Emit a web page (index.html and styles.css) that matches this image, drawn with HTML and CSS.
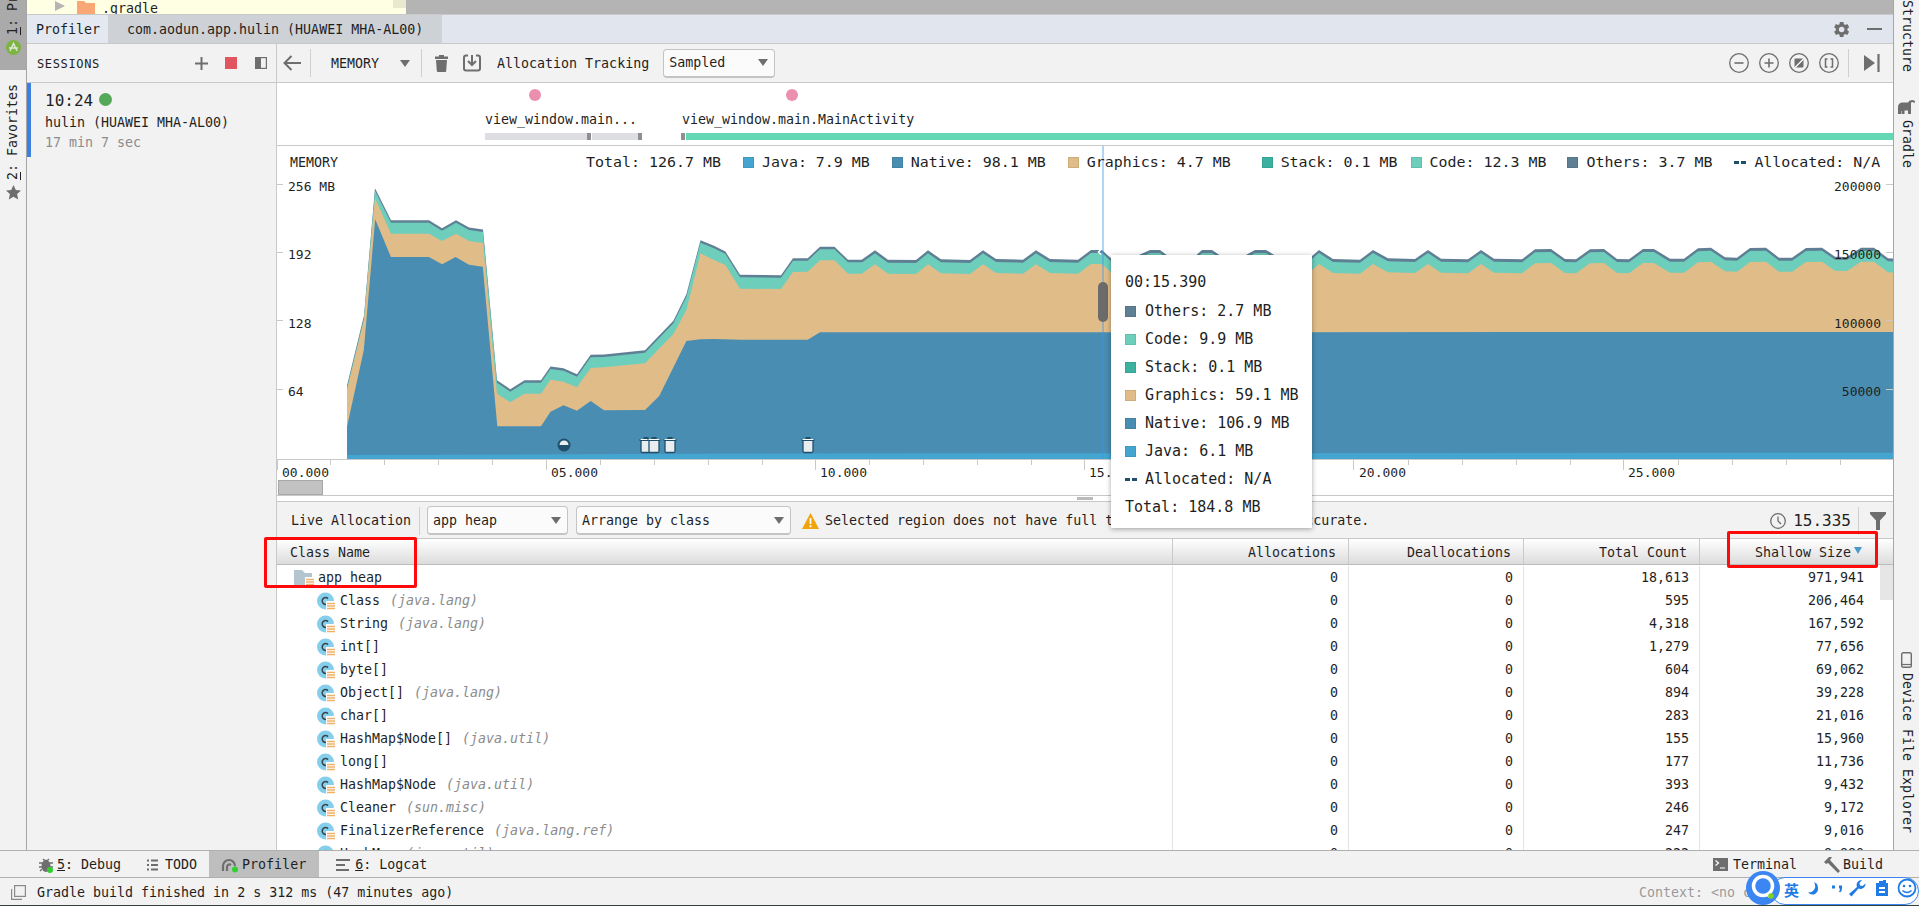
FILE: index.html
```html
<!DOCTYPE html>
<html lang="en">
<head>
<meta charset="utf-8">
<title>Profiler</title>
<link rel="stylesheet" href="styles.css">
</head>
<body>
<svg class="defs" width="0" height="0" aria-hidden="true">
  <defs>
    <g id="listmark"><rect x="9" y="9" width="9" height="9" fill="#fff"/><path d="M10 11.5h8M10 14h8M10 16.5h8" stroke="#efb26e" stroke-width="1.4"/></g>
    <symbol id="cls" viewBox="0 0 18 18"><circle cx="8.5" cy="9" r="8.5" fill="#86cfec"/><path d="M11 6.6A3.4 3.4 0 1 0 11 11.4" fill="none" stroke="#37474f" stroke-width="1.5"/><use href="#listmark"/></symbol>
    <symbol id="fold" viewBox="0 0 20 16"><path d="M0 0h8l3 3h7v13H0z" fill="#b4c5d0"/><g transform="translate(2 -2)"><use href="#listmark"/></g></symbol>
    <path id="tail" d="M862 259.5L875 250.3 888 259.7 916 260 928 250.3 941 259.3 970 260 983 250.3 996 259 1023 259.7 1036 250.3 1050 259 1078 259.7 1091 250 1102 250 1111 258.3 1130 259 1150 250 1160 250 1172 259 1192 259 1202 250 1212 250 1221 256 1244 256 1255 250 1266 250 1276 256 1312 256 1319 250 1333 259 1360 259.7 1373 250 1388 258.3 1415 259 1428 250 1441 258.7 1468 259.3 1481 250 1494 258.7 1522 259.3 1535 249.3 1551 249 1565 259 1576 259.3 1590 249.3 1604 249 1617 259 1629 259.3 1643 249 1654 249 1670 258.7 1684 258.7 1698 248.3 1711 247.7 1725 257.3 1737 257.7 1750 248 1766 247.7 1779 257.7 1792 257.7 1806 248 1822 247.7 1835 256.7 1847 257 1861 247.7 1874 247.7 1888 258.3 1893 258.5V400H862Z"/>
    <path id="codehead" d="M347 459V388L364 318 375 190.7 391 222.7H429L442 230.7 456 222.7 469 230 483 232 497 382.7 510.3 391.7 524.5 382.7H541L550.5 369 563.5 370.7 577 376.7 590.7 357.3 604 357 645 352.7 673.4 323.3 686.4 296.7 700.5 242.7 714 248.3 725.4 254 740 277.3 781 277.7 793 260.7H807.7L820 249.3H834.5L848 262.3H863V459Z"/>
    <g id="trash"><path d="M-5 -5h10v11q0 1.500-1.500 1.500h-7q-1.500 0-1.500-1.500z" fill="#e9edf0" stroke="#1f4f6b" stroke-width="1.300"/><path d="M-6.500 -5h13M-2.500 -7h5" stroke="#1f4f6b" stroke-width="1.800" /><path d="M-5.500 -5.500h11" stroke="#fff" stroke-width="1"/></g>
  </defs>
</svg>

<div class="app">
  <div class="main">
    <aside class="left-strip">
      <div class="project-block">
        <div class="v-text up"><u>1</u>: Project</div>
        <svg class="android" width="15" height="15" viewBox="0 0 15 15"><circle cx="7.500" cy="7.500" r="7.500" fill="#7cb342"/><path d="M4 11L7.500 3.500 11 11M3 8h9" fill="none" stroke="#dfe7d8" stroke-width="1.500"/></svg>
      </div>
      <div class="fav-block">
        <div class="v-text up"><u>2</u>: Favorites</div>
        <svg width="15" height="15" viewBox="0 0 15 15"><path d="M7.500 0l2.300 5 5.200.6-3.900 3.500 1.100 5.400-4.700-2.800-4.700 2.800 1.100-5.400L0 5.600 5.200 5z" fill="#6e6e6e"/></svg>
      </div>
    </aside>

    <div class="center">
      <div class="code-strip">
        <div class="code-yellow">
          <span class="tree-arrow"></span>
          <svg class="tree-folder" width="18" height="14" viewBox="0 0 18 14"><path d="M0 0h7l2 2h9v12H0z" fill="#f9a875"/></svg>
          <span class="mono-text">.gradle</span>
          <span class="code-chip"></span>
        </div>
      </div>

      <div class="tabbar">
        <div class="tab tab-active">Profiler</div>
        <div class="tab tab-inactive">com.aodun.app.hulin (HUAWEI MHA-AL00)</div>
        <div class="tab-tools">
          <svg width="19" height="19" viewBox="0 0 24 24"><path fill="#6e6e6e" fill-rule="evenodd" d="M19.400 13a7.500 7.500 0 0 0 0-2l2.300-1.800-2.300-4-2.700 1.100a7.500 7.500 0 0 0-1.700-1L14.500 2.500h-4.600L9.500 5.300a7.500 7.500 0 0 0-1.700 1L5 5.200l-2.300 4L5 11a7.500 7.500 0 0 0 0 2l-2.300 1.800 2.300 4 2.800-1.100a7.500 7.500 0 0 0 1.700 1l.4 2.800h4.600l.4-2.800a7.500 7.500 0 0 0 1.700-1l2.700 1.100 2.300-4zM12.200 15.500a3.500 3.500 0 1 1 0-7 3.500 3.500 0 0 1 0 7z"/></svg>
          <span class="dash"></span>
        </div>
      </div>

      <div class="profiler">
        <section class="sessions">
          <header class="sessions-head">
            <span class="sessions-title">SESSIONS</span>
            <svg class="plus" width="13" height="13" viewBox="0 0 13 13"><path d="M6.500 0v13M0 6.500h13" stroke="#6e6e6e" stroke-width="2"/></svg>
            <span class="stop"></span>
            <svg class="layout" width="12" height="12" viewBox="0 0 12 12"><rect x=".6" y=".6" width="10.800" height="10.800" fill="none" stroke="#6e6e6e" stroke-width="1.200"/><rect x="0" y="0" width="6" height="12" fill="#6e6e6e"/></svg>
          </header>
          <div class="session">
            <div class="session-time">10:24<span class="live-dot"></span></div>
            <div class="session-name">hulin (HUAWEI MHA-AL00)</div>
            <div class="session-dur">17 min 7 sec</div>
          </div>
        </section>

        <section class="stage">
          <div class="toolbar">
            <svg class="tb-back" width="18" height="16" viewBox="0 0 18 16"><path d="M18 8H2M8.500 1L1.500 8l7 7" fill="none" stroke="#6e6e6e" stroke-width="2"/></svg>
            <span class="sep sep-a"></span>
            <span class="tb-memory">MEMORY</span>
            <span class="caret tb-caret"></span>
            <span class="sep sep-b"></span>
            <svg class="tb-trash" width="13" height="17" viewBox="0 0 13 17"><path d="M4 0h5v1.500h4V4H0V1.500h4zM1 5h11l-.8 11q-.1 1-1 1H2.800q-.9 0-1-1z" fill="#6e6e6e"/></svg>
            <svg class="tb-save" width="18" height="18" viewBox="0 0 18 18"><path d="M5 1.500H3Q1 1.500 1 3.500v11q0 2 2 2h12q2 0 2-2v-11q0-2-2-2h-2" fill="none" stroke="#6e6e6e" stroke-width="2"/><path d="M9 1v9M5 7l4 4 4-4" fill="none" stroke="#6e6e6e" stroke-width="2"/></svg>
            <span class="tb-alloc">Allocation Tracking</span>
            <div class="combo combo-sampled"><span>Sampled</span><span class="caret"></span></div>
            <div class="tb-right">
              <svg width="20" height="20" viewBox="0 0 20 20"><circle cx="10" cy="10" r="9.300" fill="none" stroke="#6e6e6e" stroke-width="1.300"/><path d="M5.500 10h9" stroke="#6e6e6e" stroke-width="1.600"/></svg>
              <svg width="20" height="20" viewBox="0 0 20 20"><circle cx="10" cy="10" r="9.300" fill="none" stroke="#6e6e6e" stroke-width="1.300"/><path d="M5.500 10h9M10 5.500v9" stroke="#6e6e6e" stroke-width="1.600"/></svg>
              <svg width="20" height="20" viewBox="0 0 20 20"><circle cx="10" cy="10" r="9.300" fill="none" stroke="#6e6e6e" stroke-width="1.300"/><rect x="5.500" y="5.500" width="9" height="9" rx="1" fill="#6e6e6e"/><path d="M6 14.500L14.500 6" stroke="#fff" stroke-width="1.200"/></svg>
              <svg width="20" height="20" viewBox="0 0 20 20"><circle cx="10" cy="10" r="9.300" fill="none" stroke="#6e6e6e" stroke-width="1.300"/><path d="M8.500 6H6.500v8h2M11.500 6h2v8h-2" fill="none" stroke="#6e6e6e" stroke-width="1.500"/></svg>
              <span class="sep sep-c"></span>
              <svg class="tb-end" width="16" height="18" viewBox="0 0 16 18"><path d="M0 1l11 8-11 8z" fill="#6e6e6e"/><path d="M14.500 0v18" stroke="#6e6e6e" stroke-width="2.200"/></svg>
            </div>
          </div>

          <div class="events">
            <span class="pin pin-a"></span>
            <span class="pin pin-b"></span>
            <div class="activity act-a">
              <span class="act-label">view_window.main...</span>
              <div class="act-bar"><span class="seg seg-g1"></span><span class="seg-t"></span><span class="seg seg-g2"></span><span class="seg-t"></span></div>
            </div>
            <div class="activity act-b">
              <span class="act-label">view_window.main.MainActivity</span>
              <div class="act-bar"><span class="seg-t"></span><span class="seg seg-green"></span></div>
            </div>
          </div>

          <div class="chart">
            <div class="legend">
              <span class="legend-title">MEMORY</span>
              <span class="lg-total">Total: 126.7 MB</span>
              <span class="lg"><i class="sw sw-java"></i>Java: 7.9 MB</span>
              <span class="lg"><i class="sw sw-native"></i>Native: 98.1 MB</span>
              <span class="lg"><i class="sw sw-gfx"></i>Graphics: 4.7 MB</span>
              <span class="lg lg-stack"><i class="sw sw-stack"></i>Stack: 0.1 MB</span>
              <span class="lg lg-code"><i class="sw sw-code"></i>Code: 12.3 MB</span>
              <span class="lg lg-others"><i class="sw sw-others"></i>Others: 3.7 MB</span>
              <span class="lg lg-alloc"><i class="dashes"></i>Allocated: N/A</span>
            </div>
            <svg class="plot" width="1616" height="349" viewBox="277 146 1616 349">
              <g class="a-others">
                <use href="#codehead" transform="translate(0 -2.500)"/>
                <use href="#tail"/>
              </g>
              <g class="a-code">
                <use href="#codehead"/>
                <use href="#tail" transform="translate(0 3)"/>
              </g>
              <g class="a-gfx">
                <polygon points="347,459 347,390 364,320 375,198 391,233.700 429,233.700 442,241 456,233.700 469,241 483,243 497,393.700 510.300,402.300 524.500,393.700 541,393.700 550.500,379.700 563.500,381.700 577,387.300 590.700,368 604,367.300 645,363.300 673.400,334 686.400,310 700.500,253.300 714,260 725.400,265 740,288.700 781,289 793,272 807.700,271.700 820,260.300 834.500,260.300 848,273.700 863,273.700 863,459"/>
                <use href="#tail" transform="translate(0 14)"/>
              </g>
              <polygon class="a-native" points="347,459 347,426.700 363.800,350 375.200,219.300 390.900,257 428.800,257 442.200,264.300 455.600,257 469,264.700 482.800,266.700 497.300,426.300 541,426.300 550.500,411.700 563.500,405.300 576.900,410.700 590.700,401 604,410.300 645,410 659.200,396 686.400,341 700.500,339.300 714,339 740.700,339.700 807.700,339.700 820,332.300 1893,332 1893,459"/>
              <polygon class="a-java" points="347,459 347,455 800,453.500 1893,452.700 1893,459"/>

              <g transform="translate(564 445)"><circle r="6.500" fill="#1f4f6b"/><path d="M-4.500 0a4.500 4.500 0 0 1 9 0z" fill="#e9edf0"/></g>
              <use href="#trash" transform="translate(646 445)"/>
              <use href="#trash" transform="translate(654 445)"/>
              <use href="#trash" transform="translate(670 445)"/>
              <use href="#trash" transform="translate(808 445)"/>

              <path class="axis" d="M277 459.500H1893M277 184.500h6M277 252.500h6M277 320.500h6M277 389.500h6M1893 184.500h-7M1893 252.500h-7M1893 320.500h-7M1893 389.500h-7"/>
              <path class="axis" d="M277.500 459v11M330.500 459v6M384.500 459v6M438.500 459v6M492.500 459v6M546.500 459v11M600.500 459v6M654.500 459v6M708.500 459v6M762.500 459v6M815.500 459v11M869.500 459v6M923.500 459v6M977.500 459v6M1031.500 459v6M1084.500 459v11M1139.500 459v6M1193.500 459v6M1247.500 459v6M1301.500 459v6M1353.500 459v11M1408.500 459v6M1462.500 459v6M1516.500 459v6M1570.500 459v6M1623.500 459v11M1678.500 459v6M1732.500 459v6M1786.500 459v6M1840.500 459v6"/>

              <text class="tk" x="288" y="191">256 MB</text>
              <text class="tk" x="288" y="259">192</text>
              <text class="tk" x="288" y="328">128</text>
              <text class="tk" x="288" y="396">64</text>
              <text class="tk" x="1881" y="191" text-anchor="end">200000</text>
              <text class="tk" x="1881" y="259" text-anchor="end">150000</text>
              <text class="tk" x="1881" y="328" text-anchor="end">100000</text>
              <text class="tk" x="1881" y="396" text-anchor="end">50000</text>

              <text class="tk" x="282" y="477">00.000</text>
              <text class="tk" x="551" y="477">05.000</text>
              <text class="tk" x="820" y="477">10.000</text>
              <text class="tk" x="1089" y="477">15.000</text>
              <text class="tk" x="1359" y="477">20.000</text>
              <text class="tk" x="1628" y="477">25.000</text>

              <rect class="thumb" x="278.500" y="480.500" width="44" height="14"/>

              <rect class="cursor" x="1102" y="146" width="2" height="313"/>
              <rect class="handle" x="1098" y="282" width="10" height="40" rx="5"/>
              <path class="chev" d="M1101 249.500l-2.500 2.500 2.500 2.500M1111 249.500l2.500 2.500-2.500 2.500"/>
            </svg>
          </div>

          <div class="split"><span class="grip"></span></div>

          <div class="filter">
            <span class="f-live">Live Allocation</span>
            <span class="sep sep-d"></span>
            <div class="combo combo-heap"><span>app heap</span><span class="caret"></span></div>
            <div class="combo combo-arr"><span>Arrange by class</span><span class="caret"></span></div>
            <svg class="warn" width="17" height="16" viewBox="0 0 17 16"><path d="M8.500 0L17 16H0z" fill="#f0a30a"/><path d="M8.500 5v6M8.500 12.300v2" stroke="#fff" stroke-width="1.800"/></svg>
            <span class="warn-text">Selected region does not have full tracking. Data may be inaccurate.</span>
            <div class="f-right">
              <svg width="16" height="16" viewBox="0 0 16 16"><circle cx="8" cy="8" r="7.300" fill="none" stroke="#6e6e6e" stroke-width="1.300"/><path d="M8 3.500V8l3 3" fill="none" stroke="#6e6e6e" stroke-width="1.300"/></svg>
              <span class="f-time">15.335</span>
              <span class="sep sep-e"></span>
              <svg class="f-funnel" width="16" height="18" viewBox="0 0 16 18"><path d="M0 0h16v2L10 8.500V18H6V8.500L0 2z" fill="#6e6e6e"/></svg>
            </div>
          </div>

          <div class="thead">
            <div class="th th-name">Class Name</div>
            <div class="th">Allocations</div>
            <div class="th">Deallocations</div>
            <div class="th">Total Count</div>
            <div class="th th-sort">Shallow Size<i class="sort-tri"></i></div>
            <div class="th-fill"></div>
          </div>

          <div class="tbody">
            <div class="rows">
              <div class="row">
                <div class="cell-name lvl-0"><svg class="ico-fold"><use href="#fold"/></svg>app heap</div>
                <div class="num">0</div><div class="num">0</div><div class="num">18,613</div><div class="num num-last">971,941</div>
              </div>
              <div class="row">
                <div class="cell-name lvl-1"><svg class="ico-cls"><use href="#cls"/></svg>Class<em>(java.lang)</em></div>
                <div class="num">0</div><div class="num">0</div><div class="num">595</div><div class="num num-last">206,464</div>
              </div>
              <div class="row">
                <div class="cell-name lvl-1"><svg class="ico-cls"><use href="#cls"/></svg>String<em>(java.lang)</em></div>
                <div class="num">0</div><div class="num">0</div><div class="num">4,318</div><div class="num num-last">167,592</div>
              </div>
              <div class="row">
                <div class="cell-name lvl-1"><svg class="ico-cls"><use href="#cls"/></svg>int[]</div>
                <div class="num">0</div><div class="num">0</div><div class="num">1,279</div><div class="num num-last">77,656</div>
              </div>
              <div class="row">
                <div class="cell-name lvl-1"><svg class="ico-cls"><use href="#cls"/></svg>byte[]</div>
                <div class="num">0</div><div class="num">0</div><div class="num">604</div><div class="num num-last">69,062</div>
              </div>
              <div class="row">
                <div class="cell-name lvl-1"><svg class="ico-cls"><use href="#cls"/></svg>Object[]<em>(java.lang)</em></div>
                <div class="num">0</div><div class="num">0</div><div class="num">894</div><div class="num num-last">39,228</div>
              </div>
              <div class="row">
                <div class="cell-name lvl-1"><svg class="ico-cls"><use href="#cls"/></svg>char[]</div>
                <div class="num">0</div><div class="num">0</div><div class="num">283</div><div class="num num-last">21,016</div>
              </div>
              <div class="row">
                <div class="cell-name lvl-1"><svg class="ico-cls"><use href="#cls"/></svg>HashMap$Node[]<em>(java.util)</em></div>
                <div class="num">0</div><div class="num">0</div><div class="num">155</div><div class="num num-last">15,960</div>
              </div>
              <div class="row">
                <div class="cell-name lvl-1"><svg class="ico-cls"><use href="#cls"/></svg>long[]</div>
                <div class="num">0</div><div class="num">0</div><div class="num">177</div><div class="num num-last">11,736</div>
              </div>
              <div class="row">
                <div class="cell-name lvl-1"><svg class="ico-cls"><use href="#cls"/></svg>HashMap$Node<em>(java.util)</em></div>
                <div class="num">0</div><div class="num">0</div><div class="num">393</div><div class="num num-last">9,432</div>
              </div>
              <div class="row">
                <div class="cell-name lvl-1"><svg class="ico-cls"><use href="#cls"/></svg>Cleaner<em>(sun.misc)</em></div>
                <div class="num">0</div><div class="num">0</div><div class="num">246</div><div class="num num-last">9,172</div>
              </div>
              <div class="row">
                <div class="cell-name lvl-1"><svg class="ico-cls"><use href="#cls"/></svg>FinalizerReference<em>(java.lang.ref)</em></div>
                <div class="num">0</div><div class="num">0</div><div class="num">247</div><div class="num num-last">9,016</div>
              </div>
              <div class="row">
                <div class="cell-name lvl-1"><svg class="ico-cls"><use href="#cls"/></svg>HashMap<em>(java.util)</em></div>
                <div class="num">0</div><div class="num">0</div><div class="num">222</div><div class="num num-last">8,880</div>
              </div>
            </div>
            <div class="vscroll"><span class="vthumb"></span></div>
          </div>
        </section>
      </div>
    </div>

    <aside class="right-strip">
      <div class="v-text rs-structure">Structure</div>
      <svg class="rs-gradle" width="17" height="14" viewBox="0 0 17 14"><path d="M0 14V7q0-4 4-4.500h6q1-2.500 4-2.500 3 0 3 2 0 1-1 1-.5-1-2-1-1 0-1 1.500V14h-3v-3.500H6.500V14h-3v-3H3v3z" fill="#6e6e6e"/></svg>
      <div class="v-text rs-gradle-t">Gradle</div>
      <svg class="rs-device" width="11" height="16" viewBox="0 0 11 16"><rect x=".7" y=".7" width="9.600" height="14.600" rx="1.500" fill="none" stroke="#6e6e6e" stroke-width="1.400"/><path d="M1 12.500h9" stroke="#6e6e6e" stroke-width="1.200"/></svg>
      <div class="v-text">Device File Explorer</div>
    </aside>
  </div>

  <div class="toolbars">
    <div class="tw-item">
      <svg width="14" height="16" viewBox="0 0 14 16"><path d="M4 2l1.500 1.500h3L10 2M0 6h14M0 10h14M1 14l2-2M13 14l-2-2" stroke="#6e6e6e" stroke-width="1.300" fill="none"/><ellipse cx="7" cy="9" rx="4.500" ry="6" fill="#6e6e6e"/><circle cx="11" cy="13" r="3" fill="#2fd12f"/></svg>
      <span><u>5</u>: Debug</span>
    </div>
    <div class="tw-item tw-todo">
      <svg width="14" height="12" viewBox="0 0 14 12"><path d="M0 1.500h2M0 6h2M0 10.500h2M4 1.500h7M4 6h7M4 10.500h7" stroke="#6e6e6e" stroke-width="2"/></svg>
      <span>TODO</span>
    </div>
    <div class="tw-item tw-on">
      <svg width="17" height="16" viewBox="0 0 17 16"><path d="M2 14V9a6 6 0 0 1 12 0M6 14V10a2.500 2.500 0 0 1 4-2" fill="none" stroke="#6e6e6e" stroke-width="2.200"/><circle cx="14" cy="12.500" r="3" fill="#2fd12f"/></svg>
      <span>Profiler</span>
    </div>
    <div class="tw-item">
      <svg width="15" height="12" viewBox="0 0 15 12"><path d="M0 1h14M0 6h9M0 11h13" stroke="#6e6e6e" stroke-width="2"/></svg>
      <span><u>6</u>: Logcat</span>
    </div>
    <div class="tw-item tw-terminal">
      <svg width="15" height="13" viewBox="0 0 15 13"><rect width="15" height="13" fill="#6e6e6e"/><path d="M2.500 2.500l3 2.500-3 2.500M7 10h5" fill="none" stroke="#fff" stroke-width="1.200"/></svg>
      <span>Terminal</span>
    </div>
    <div class="tw-item tw-build">
      <svg width="17" height="16" viewBox="0 0 17 16"><path d="M1 5L6 0h3L7 3l10 11-2 2L5 6 3 7z" fill="#6e6e6e"/></svg>
      <span>Build</span>
    </div>
  </div>

  <div class="status">
    <svg class="st-icon" width="15" height="15" viewBox="0 0 15 15"><path d="M.6 4v10.400H11" fill="none" stroke="#8a8a8a" stroke-width="1.200"/><rect x="3.600" y=".6" width="10.800" height="10.800" fill="none" stroke="#8a8a8a" stroke-width="1.200"/></svg>
    <span>Gradle build finished in 2 s 312 ms (47 minutes ago)</span>
    <span class="st-context">Context: &lt;no context&gt;</span>
  </div>

  <div class="tooltip">
    <div class="tip-time">00:15.390</div>
    <div class="tip-row"><i class="sw sw-others"></i>Others: 2.7 MB</div>
    <div class="tip-row"><i class="sw sw-code"></i>Code: 9.9 MB</div>
    <div class="tip-row"><i class="sw sw-stack"></i>Stack: 0.1 MB</div>
    <div class="tip-row"><i class="sw sw-gfx"></i>Graphics: 59.1 MB</div>
    <div class="tip-row"><i class="sw sw-native"></i>Native: 106.9 MB</div>
    <div class="tip-row"><i class="sw sw-java"></i>Java: 6.1 MB</div>
    <div class="tip-row"><i class="dashes"></i>Allocated: N/A</div>
    <div class="tip-row">Total: 184.8 MB</div>
  </div>

  <div class="mark mark-name"></div>
  <div class="mark mark-size"></div>

  <svg class="ime" width="174" height="36" viewBox="0 0 174 36">
    <rect x="26.500" y="7.500" width="147" height="27" rx="13.500" fill="#fff" stroke="#3b86f2"/>
    <circle cx="18" cy="18" r="17" fill="#3b86f2"/>
    <circle cx="18" cy="16" r="9.500" fill="none" stroke="#fff" stroke-width="3.500"/>
    <path d="M22 23l3 4" stroke="#fff" stroke-width="3"/>
    <circle cx="26" cy="26" r="2.800" fill="#7ed321"/>
    <text class="ime-zh" x="39" y="26">英</text>
    <path d="M69 12q3 5-1 9-2 1.500-5 1.500 3 3 7 1.500 5-3 2-10z" fill="#1f7ce6"/>
    <path d="M87 15.500h3v3h-3zM94 15.500h3v3q0 3-2 4l-1-1q1-1 1-3h-1z" fill="#1f7ce6"/>
    <path d="M117 10a5 5 0 0 0-5 7l-8 7 2.500 2.500 7-8a5 5 0 0 0 7-5l-3 2.500-2.500-.5-.5-2.500z" fill="#1f7ce6"/>
    <path d="M131 13h3v-2h4v-1h3v3h2v13h-12zM134 17v2h6v-2zM134 21v2h6v-2z" fill="#1f7ce6" fill-rule="evenodd"/>
    <circle cx="162" cy="18" r="8.500" fill="none" stroke="#1f7ce6" stroke-width="1.800"/>
    <circle cx="159" cy="16" r="1.300" fill="#1f7ce6"/><circle cx="165" cy="16" r="1.300" fill="#1f7ce6"/>
    <path d="M157.500 20.500q4.500 4 9 0" fill="none" stroke="#1f7ce6" stroke-width="1.500"/>
  </svg>
</div>
</body>
</html>
```

FILE: styles.css
```css
* { box-sizing: border-box; }

html, body {
  margin: 0;
  height: 100%;
  overflow: hidden;
}

body {
  font-family: "DejaVu Sans Mono", "Liberation Mono", monospace;
  font-size: 13.3px;
  color: #1f1f1f;
  background: #f2f2f2;
}

.defs { position: absolute; }

.app {
  position: relative;
  width: 1919px;
  height: 906px;
  display: flex;
  flex-direction: column;
  overflow: hidden;
}

.main {
  height: 850px;
  flex: none;
  display: flex;
  overflow: hidden;
}

.v-text {
  writing-mode: vertical-rl;
  line-height: 16px;
  white-space: nowrap;
  flex: none;
}
.v-text.up { transform: rotate(180deg); }

/* left strip */
.left-strip {
  width: 27px;
  flex: none;
  border-right: 1px solid #a6a6a6;
  display: flex;
  flex-direction: column;
}
.project-block {
  height: 70px;
  background: #aaaaaa;
  display: flex;
  flex-direction: column;
  justify-content: flex-end;
  align-items: center;
  padding-bottom: 15px;
  overflow: hidden;
  gap: 5px;
}
.android { flex: none; }
.fav-block {
  padding-top: 14px;
  display: flex;
  flex-direction: column;
  align-items: center;
  gap: 5px;
}

/* right strip */
.right-strip {
  width: 26px;
  flex: none;
  border-left: 1px solid #a6a6a6;
  display: flex;
  flex-direction: column;
  align-items: center;
}
.rs-gradle { margin-top: 28px; flex: none; }
.rs-gradle-t { margin-top: 6px; }
.rs-device { margin-top: 484px; margin-bottom: 5px; flex: none; }

/* centre */
.center {
  flex: 1;
  min-width: 0;
  display: flex;
  flex-direction: column;
}

.code-strip {
  height: 15px;
  flex: none;
  background: #b4b4b4;
  border-bottom: 1px solid #c9c9c9;
  overflow: hidden;
}
.code-yellow {
  width: 379px;
  height: 14px;
  background: #ffffe4;
  display: flex;
  align-items: flex-start;
  position: relative;
}
.tree-arrow {
  margin: 1px 0 0 28px;
  border-left: 10px solid #b5b5b5;
  border-top: 5.5px solid transparent;
  border-bottom: 5.5px solid transparent;
}
.tree-folder { margin: 1px 0 0 12px; flex: none; }
.mono-text { margin: 0 0 0 7px; line-height: 18px; }
.code-chip {
  position: absolute;
  right: 0;
  top: 0;
  width: 13px;
  height: 8px;
  background: #e9e9d0;
}

.tabbar {
  height: 29px;
  flex: none;
  background: #e1e5ed;
  border-bottom: 1px solid #c9c9c9;
  display: flex;
  align-items: stretch;
}
.tab {
  display: flex;
  align-items: center;
  white-space: nowrap;
  padding-top: 1px;
}
.tab-active {
  width: 81px;
  padding-left: 9px;
  background: #e4e8f0;
}
.tab-inactive {
  width: 334px;
  padding-left: 19px;
  background: #ced1d6;
}
.tab-tools {
  margin-left: auto;
  display: flex;
  align-items: center;
  padding-right: 11px;
  gap: 16px;
}
.dash {
  width: 15px;
  height: 2px;
  background: #6e6e6e;
}

.profiler {
  flex: 1;
  min-height: 0;
  display: flex;
}

/* sessions */
.sessions {
  width: 250px;
  flex: none;
  border-right: 1px solid #c9c9c9;
  background: #f2f2f2;
}
.sessions-head {
  height: 39px;
  border-bottom: 1px solid #c9c9c9;
  display: flex;
  align-items: center;
  padding-left: 10px;
}
.sessions-title {
  font-size: 12px;
  letter-spacing: .65px;
  width: 158px;
  padding-top: 2px;
}
.stop {
  width: 12px;
  height: 12px;
  background: #e0555f;
  margin-left: 17px;
}
.layout { margin-left: 18px; }
.session {
  height: 74px;
  border-left: 4px solid #3d80e0;
  padding: 8px 0 0 14px;
}
.session-time {
  font-size: 16px;
  line-height: 20px;
  display: flex;
  align-items: center;
}
.live-dot {
  width: 13px;
  height: 13px;
  border-radius: 50%;
  background: #53a957;
  margin: -4px 0 0 6px;
}
.session-name { line-height: 20px; margin-top: 2px; }
.session-dur { line-height: 20px; color: #8c8c8c; }

/* stage */
.stage {
  flex: 1;
  min-width: 0;
  display: flex;
  flex-direction: column;
  background: #fff;
}

.toolbar {
  height: 39px;
  flex: none;
  background: #f2f2f2;
  border-bottom: 1px solid #c9c9c9;
  display: flex;
  align-items: center;
}
.sep {
  width: 1px;
  height: 28px;
  background: #cfcfcf;
  flex: none;
}
.tb-back { margin-left: 6px; flex: none; }
.sep-a { margin-left: 9px; }
.tb-memory { margin-left: 20px; }
.caret {
  width: 0;
  height: 0;
  flex: none;
  border-top: 7px solid #6e6e6e;
  border-left: 5.5px solid transparent;
  border-right: 5.5px solid transparent;
}
.tb-caret { margin-left: 21px; }
.sep-b { margin-left: 11px; }
.tb-trash { margin-left: 13px; flex: none; }
.tb-save { margin-left: 15px; flex: none; }
.tb-alloc { margin-left: 16px; }

.combo {
  height: 29px;
  background: #fbfbfb;
  border: 1px solid #c4c4c4;
  border-bottom-width: 2px;
  border-radius: 4px;
  display: flex;
  align-items: center;
  justify-content: space-between;
  padding: 0 6px 0 5px;
  flex: none;
}
.combo-sampled { width: 112px; margin-left: 14px; }
.tb-right {
  margin-left: auto;
  display: flex;
  align-items: center;
  gap: 10px;
  padding-right: 13px;
}
.sep-c { margin-left: -1px; }
.tb-end { margin-left: 5px; }

.events {
  height: 63px;
  flex: none;
  position: relative;
  border-bottom: 1px solid #c9c9c9;
  background: #fff;
}
.pin {
  position: absolute;
  top: 6px;
  width: 12px;
  height: 12px;
  border-radius: 50%;
  background: #ea8fae;
}
.pin-a { left: 252px; }
.pin-b { left: 509px; }
.activity {
  position: absolute;
  top: 27px;
  display: flex;
  flex-direction: column;
}
.act-a { left: 208px; width: 158px; }
.act-b { left: 404px; right: 0; }
.act-label { line-height: 20px; white-space: nowrap; }
.act-b .act-label { padding-left: 1px; }
.act-bar {
  display: flex;
  height: 7px;
  margin-top: 3px;
}
.seg-t { width: 4px; background: #8f8f8f; margin-right: 1px; flex: none; }
.seg-g1 { width: 102px; background: #dcdee1; margin-right: 0; }
.seg-g2 { width: 46px; background: #dcdee1; }
.seg-green { flex: 1; background: #64d7b4; }

.chart {
  height: 350px;
  flex: none;
  position: relative;
  border-bottom: 1px solid #c9c9c9;
}
.legend {
  position: relative;
  z-index: 1;
  height: 26px;
  display: flex;
  align-items: center;
  font-size: 14.95px;
  padding: 6px 0 0 13px;
  white-space: nowrap;
}
.legend-title { font-size: 13.3px; width: 296px; }
.lg { display: flex; align-items: center; margin-left: 22px; }
.lg-stack { margin-left: 31px; }
.lg-code { margin-left: 13px; }
.lg-others { margin-left: 21px; }
.lg-alloc { margin-left: 22px; }
.sw {
  width: 11px;
  height: 11px;
  flex: none;
  margin-right: 8px;
  border: 1px solid rgba(0, 0, 0, .08);
}
.sw-java { background: #45a5d1; }
.sw-native { background: #498db3; }
.sw-gfx { background: #e0bc88; }
.sw-stack { background: #3cb1a0; }
.sw-code { background: #6dcebc; }
.sw-others { background: #5f7f95; }
.dashes {
  width: 12px;
  height: 3px;
  flex: none;
  margin-right: 8px;
  background: linear-gradient(to right, #1f4f6b 5px, transparent 5px, transparent 7px, #1f4f6b 7px);
}

.plot {
  position: absolute;
  left: 0;
  top: 0;
  display: block;
}
.a-others { fill: #5f7f95; }
.a-code { fill: #6dcebc; }
.a-gfx { fill: #e0bc88; }
.a-native { fill: #498db3; }
.a-java { fill: #45a5d1; }
.axis { fill: none; stroke: #c9c9c9; stroke-width: 1; }
.tk {
  font-family: "DejaVu Sans Mono", "Liberation Mono", monospace;
  font-size: 13px;
  fill: #1f1f1f;
}
.thumb { fill: #c2c2c2; stroke: #a8a8a8; }
.cursor { fill: #3d95ec; fill-opacity: .4; }
.handle { fill: #6b6b6b; }
.chev { fill: none; stroke: #fff; stroke-width: 1.500; }

.split {
  height: 6px;
  flex: none;
  background: #fff;
  border-bottom: 1px solid #c9c9c9;
  display: flex;
  justify-content: center;
  align-items: center;
}
.grip {
  width: 16px;
  height: 3px;
  background-image: radial-gradient(#b5b5b5 .7px, transparent .8px);
  background-size: 2px 2px;
}

.filter {
  height: 37px;
  flex: none;
  background: #f2f2f2;
  border-bottom: 1px solid #c9c9c9;
  display: flex;
  align-items: center;
  padding: 1px 0 0 14px;
}
.f-live { width: 128px; }
.combo-heap { width: 141px; margin-left: 7px; height: 29px; }
.combo-arr { width: 215px; margin-left: 8px; height: 29px; }
.warn { margin-left: 11px; flex: none; }
.warn-text { margin-left: 6px; white-space: nowrap; }
.f-right {
  margin-left: auto;
  display: flex;
  align-items: center;
  padding-right: 7px;
}
.f-time { font-size: 16px; margin-left: 7px; }
.sep-e { margin-left: 7px; }
.f-funnel { margin-left: 11px; }

.thead {
  height: 26px;
  flex: none;
  display: grid;
  grid-template-columns: 896px 176px 175px 176px 180px 13px;
  background: linear-gradient(#ffffff, #dcdcdc);
  border-bottom: 1px solid #bbbbbb;
}
.th {
  display: flex;
  align-items: center;
  justify-content: flex-end;
  padding: 2px 12px 0 0;
  border-right: 1px solid #c9c9c9;
}
.th-name {
  justify-content: flex-start;
  padding-left: 13px;
}
.th-sort { padding-right: 18px; border-right: 0; }
.sort-tri {
  width: 0;
  height: 0;
  margin: -4px 0 0 3px;
  border-top: 7px solid #4a9ac9;
  border-left: 4.5px solid transparent;
  border-right: 4.5px solid transparent;
}

.tbody {
  flex: 1;
  min-height: 0;
  display: flex;
  overflow: hidden;
  background: #fff;
}
.rows {
  flex: 1;
  min-width: 0;
  padding-top: 1px;
}
.row {
  height: 23px;
  display: grid;
  grid-template-columns: 896px 176px 175px 176px 180px;
  align-items: stretch;
}
.row > div {
  display: flex;
  align-items: center;
  white-space: nowrap;
}
.num {
  justify-content: flex-end;
  padding-right: 10px;
  border-right: 1px solid #e3e3e3;
}
.num-last { border-right: 0; padding-right: 16px; }
.cell-name { border-right: 1px solid #e3e3e3; }
.lvl-0 { padding-left: 17px; }
.lvl-1 { padding-left: 40px; }
.cell-name em {
  color: #8c8c8c;
  font-style: italic;
  margin-left: 10px;
}
.ico-fold { width: 20px; height: 16px; margin-right: 4px; flex: none; }
.ico-cls { width: 18px; height: 18px; margin-right: 5px; flex: none; }

.vscroll {
  width: 13px;
  flex: none;
  background: #fff;
}
.vthumb {
  display: block;
  height: 35px;
  background: #e6e6e6;
}

/* bottom */
.toolbars {
  height: 28px;
  flex: none;
  background: #f2f2f2;
  border-top: 1px solid #b0b0b0;
  border-bottom: 1px solid #b0b0b0;
  display: flex;
  align-items: stretch;
  padding-left: 27px;
  gap: 3px;
}
.tw-item {
  display: flex;
  align-items: center;
  gap: 4px;
  padding: 1px 12px 0;
  white-space: nowrap;
}
.tw-todo { margin-left: -1px; }
.tw-on {
  background: #bebebe;
  margin: 0 2px 0 -3px;
  padding-right: 13px;
}
.tw-terminal { margin-left: auto; gap: 5px; padding-right: 10px; }
.tw-build {
  gap: 3px;
  padding-left: 13px;
  padding-right: 36px;
}

.status {
  height: 28px;
  flex: none;
  display: flex;
  align-items: center;
  padding: 1px 0 0 11px;
  background: #f2f2f2;
  border-bottom: 1px solid #33443a;
  white-space: nowrap;
}
.st-icon { margin-right: 11px; flex: none; }
.st-context {
  margin-left: auto;
  padding-right: 112px;
  color: #9a9a9a;
}

/* overlays */
.tooltip {
  position: absolute;
  left: 1111px;
  top: 255px;
  width: 201px;
  height: 273px;
  background: #fff;
  box-shadow: 0 1px 5px rgba(0, 0, 0, .35);
  padding: 15px 0 0 14px;
  font-size: 15px;
  z-index: 3;
}
.tip-time { line-height: 24px; margin-bottom: 3px; }
.tip-row {
  height: 28px;
  display: flex;
  align-items: center;
  white-space: nowrap;
}
.tip-row .sw { margin-right: 9px; }

.mark {
  position: absolute;
  border: 3px solid #ff0a0a;
  border-radius: 2px;
  z-index: 4;
}
.mark-name { left: 264px; top: 537px; width: 153px; height: 51px; }
.mark-size { left: 1727px; top: 531px; width: 151px; height: 37px; }

.ime {
  position: absolute;
  right: 0;
  bottom: 0;
  z-index: 5;
  display: block;
}
.ime-zh {
  font-family: "Noto Sans CJK SC", sans-serif;
  font-size: 15px;
  font-weight: 700;
  fill: #1f7ce6;
}
```
